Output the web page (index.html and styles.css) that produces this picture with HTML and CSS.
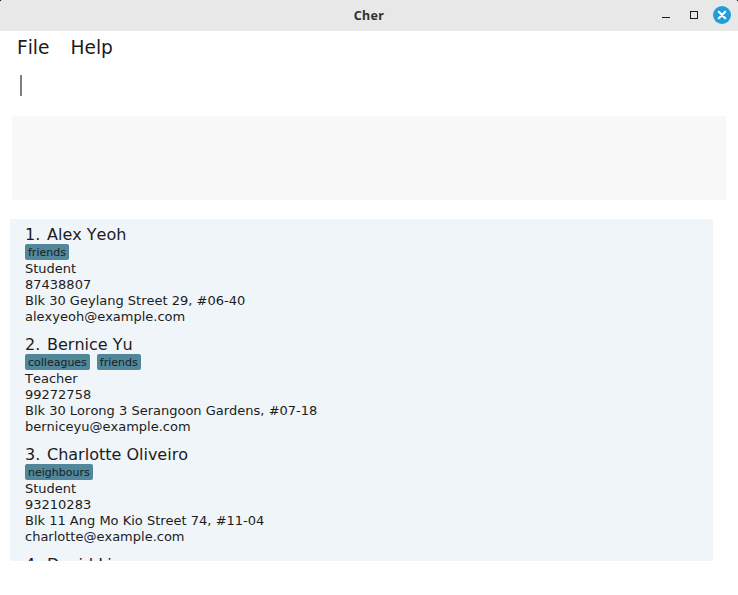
FILE: index.html
```html
<!DOCTYPE html>
<html lang="en">
<head>
<meta charset="utf-8">
<title>Cher</title>
<link rel="stylesheet" href="styles.css">
</head>
<body>
<div class="window">
  <header class="titlebar">
    <h1 class="title">Cher</h1>
    <div class="controls">
      <svg width="76" height="31" viewBox="0 0 76 31">
        <path d="M4 17.500h8" stroke="#1c1c1c" fill="none"/>
        <rect x="32.500" y="11.500" width="7" height="7" stroke="#1c1c1c" fill="none"/>
        <circle cx="64" cy="15" r="9" fill="#1f9ede"/>
        <path d="M60.800 11.800l6.400 6.400m0-6.400l-6.400 6.400" stroke="#fff" stroke-width="2.200" stroke-linecap="round" fill="none"/>
      </svg>
    </div>
  </header>
  <nav class="menu"><span>File</span><span>Help</span></nav>
  <div class="command"><span class="caret"></span></div>
  <div class="result"></div>
  <main class="list">
    <article class="card">
      <h2><span class="index">1.</span>Alex Yeoh</h2>
      <div class="tags"><span>friends</span></div>
      <p>Student</p><p>87438807</p><p>Blk 30 Geylang Street 29, #06-40</p><p>alexyeoh@example.com</p>
    </article>
    <article class="card">
      <h2><span class="index">2.</span>Bernice Yu</h2>
      <div class="tags"><span>colleagues</span><span>friends</span></div>
      <p>Teacher</p><p>99272758</p><p>Blk 30 Lorong 3 Serangoon Gardens, #07-18</p><p>berniceyu@example.com</p>
    </article>
    <article class="card">
      <h2><span class="index">3.</span>Charlotte Oliveiro</h2>
      <div class="tags"><span>neighbours</span></div>
      <p>Student</p><p>93210283</p><p>Blk 11 Ang Mo Kio Street 74, #11-04</p><p>charlotte@example.com</p>
    </article>
    <article class="card">
      <h2><span class="index">4.</span>David Li</h2>
    </article>
  </main>
</div>
</body>
</html>
```
FILE: styles.css
```css
* { box-sizing: border-box; }
body { margin: 0; background: #000; font-family: "DejaVu Sans", sans-serif; font-kerning: none; color: #1c1c1c; }
h1, h2, p { margin: 0; font-weight: normal; }
.window { width: 738px; height: 595px; background: #fff; border-radius: 3px 3px 0 0; overflow: hidden; }
.titlebar { height: 31px; background: #e8e8e8; display: grid; grid-template-columns: 76px 1fr 76px; }
.title { grid-column: 2; text-align: center; font: bold 12.500px/31px "Noto Sans", sans-serif; letter-spacing: 0.300px; color: #303030; }
.controls { margin-left: -4px; }
.controls svg { display: block; }
.menu { height: 33px; padding-left: 17px; display: flex; gap: 21px; font-size: 18.600px; line-height: 33px; }
.command { height: 52px; padding: 11px 0 0 20px; }
.caret { display: block; width: 2px; height: 21px; background: #808080; }
.result { height: 84px; margin: 0 12px; background: #f8f8f8; }
.list { width: 703px; height: 342px; margin: 19px 0 0 10px; padding-top: 6px; background: #eff5f9; overflow: hidden; }
.card { height: 110px; padding-left: 15px; }
.card h2 { display: flex; font-size: 16px; line-height: 20px; height: 19px; white-space: nowrap; }
.index { width: 22px; }
.tags { display: flex; gap: 7px; height: 16px; }
.tags span { height: 16px; padding: 0 3px; border-radius: 2px; background: #50879b; font-size: 11px; line-height: 17px; }
.card p { font-size: 13px; line-height: 16px; white-space: nowrap; }
.tags + p { margin-top: 1px; }
```
